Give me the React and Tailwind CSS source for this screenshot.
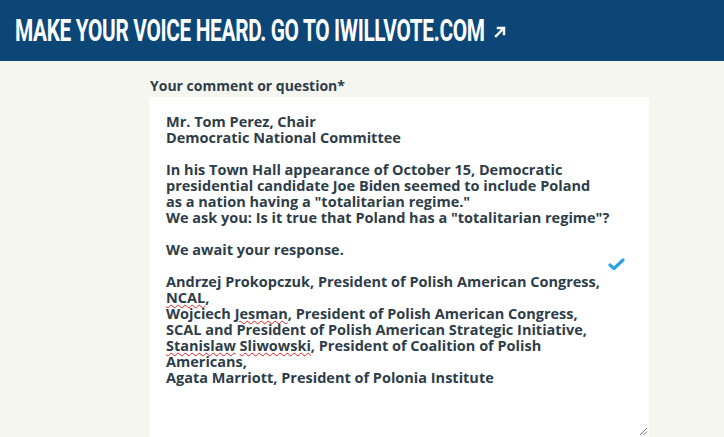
import React from "react";

const Misspelled = ({ children }) => (
  <span className="underline decoration-wavy decoration-[#e02020] decoration-1 underline-offset-[1px]">{children}</span>
);

function Header() {
  return (
    <div className="h-[61px] bg-[#0b4677] flex items-center pl-[15px]">
      <div className="w-[468px] shrink-0 whitespace-nowrap">
        <span
          className="inline-block origin-left scale-x-[0.65] text-white font-bold text-[32px] leading-none tracking-[-0.5px] uppercase"
          style={{ fontFamily: '"Liberation Sans Narrow", Roboto, sans-serif' }}
        >
          Make your voice heard. Go to iwillvote.com
        </span>
      </div>
      <svg width="14" height="14" viewBox="0 0 14 14" className="ml-[10px] mt-[2px]">
        <path d="M3 11 L11 3 M5 3 H11 V9" stroke="white" strokeWidth="2.4" fill="none" strokeLinecap="square" />
      </svg>
    </div>
  );
}

export default function App() {
  return (
    <div className="w-[724px] h-[437px] overflow-hidden bg-[#f6f6f1]" style={{ fontFamily: '"Open Sans", sans-serif' }}>
      <Header />
      <div className="pl-[149px] pt-[16px]">
        <div className="text-[14px] font-bold text-[#2e3d49] leading-[18px] pl-[1px]">Your comment or question*</div>
        <div className="relative mt-[2px] w-[500px] h-[340px] bg-white pl-[17px] pt-[17px] text-[14.5px] font-bold text-[#2e3d49] leading-[16px]">
          <p>Mr. Tom Perez, Chair</p>
          <p>Democratic National Committee</p>
          <p className="mt-[16px]">In his Town Hall appearance of October 15, Democratic</p>
          <p>presidential candidate Joe Biden seemed to include Poland</p>
          <p>as a nation having a "totalitarian regime."</p>
          <p>We ask you: Is it true that Poland has a "totalitarian regime"?</p>
          <p className="mt-[16px]">We await your response.</p>
          <p className="mt-[16px]">Andrzej Prokopczuk, President of Polish American Congress,</p>
          <p><Misspelled>NCAL</Misspelled>,</p>
          <p>Wojciech <Misspelled>Jesman</Misspelled>, President of Polish American Congress,</p>
          <p>SCAL and President of Polish American Strategic Initiative,</p>
          <p><Misspelled>Stanislaw</Misspelled> <Misspelled>Sliwowski</Misspelled>, President of Coalition of Polish</p>
          <p>Americans,</p>
          <p>Agata Marriott, President of Polonia Institute</p>
          <svg width="17" height="13" viewBox="0 0 17 13" className="absolute left-[459px] top-[161px]">
            <path d="M2 7 L6 10.5 L15 2" stroke="#2ba3e3" strokeWidth="3.2" fill="none" strokeLinecap="round" strokeLinejoin="round" />
          </svg>
          <svg width="9" height="9" viewBox="0 0 9 9" className="absolute right-[1px] bottom-[1px]">
            <path d="M8 1 L1 8 M8 4.5 L4.5 8" stroke="#777" strokeWidth="1" />
          </svg>
        </div>
      </div>
    </div>
  );
}
